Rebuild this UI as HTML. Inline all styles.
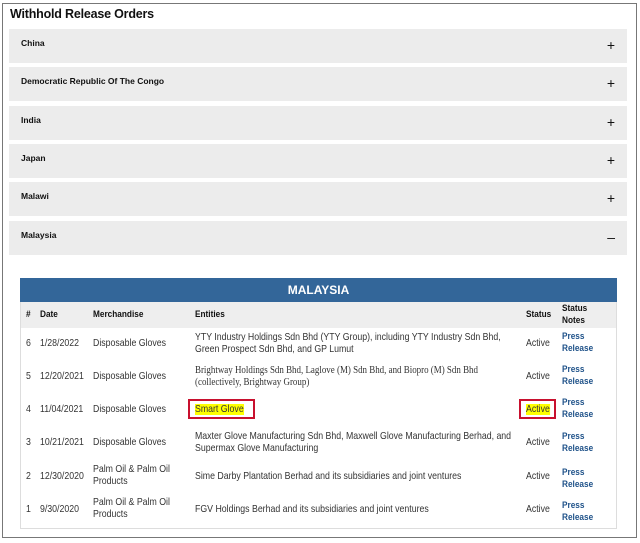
<!DOCTYPE html>
<html><head><meta charset="utf-8"><style>
*{margin:0;padding:0;box-sizing:border-box}
body{width:640px;height:543px;background:#fff;position:relative;overflow:hidden;font-family:"Liberation Sans",sans-serif;color:#222}
.frame{position:absolute;left:2px;top:3px;width:635px;height:535px;border:1.5px solid #777}
h1{position:absolute;left:10px;top:7px;font-size:12.5px;font-weight:bold;letter-spacing:-0.2px;color:#111}
.acc{position:absolute;left:9px;width:618px;height:34px;background:#ececec}
.acc span{position:absolute;left:12px;top:9px;font-size:8.5px;font-weight:bold;color:#111}
.acc i{position:absolute;right:12px;top:9px;font-style:normal;font-size:14px;color:#111;line-height:14px}
.box{position:absolute;left:20px;top:278px;width:597px;height:251px;border:1px solid #ddd}
.blue{position:absolute;left:20px;top:278px;width:597px;height:24px;background:#336699;color:#fff;font-weight:bold;font-size:12px;text-align:center;line-height:24px}
.hd{position:absolute;left:21px;top:302px;width:595px;height:26px;background:#eeeeee}
.t{position:absolute;font-size:10.2px;transform:scaleX(.86);transform-origin:0 0;white-space:nowrap;line-height:12px;color:#333}
.b{font-weight:bold;color:#111;font-size:9.6px}
.l{font-weight:bold;color:#1f5289;font-size:9.6px}
.s{font-family:"Liberation Serif",serif;font-size:10.4px}
.hl{background:#ffff00;color:#333}
.red{position:absolute;border:2px solid #c8102e}
</style></head><body>
<div class="frame"></div>
<h1>Withhold Release Orders</h1>
<div class="acc" style="top:29px"><span>China</span><i>+</i></div>
<div class="acc" style="top:67px"><span>Democratic Republic Of The Congo</span><i>+</i></div>
<div class="acc" style="top:106px"><span>India</span><i>+</i></div>
<div class="acc" style="top:144px"><span>Japan</span><i>+</i></div>
<div class="acc" style="top:182px"><span>Malawi</span><i>+</i></div>
<div class="acc" style="top:221px"><span>Malaysia</span><i>–</i></div>
<div class="box"></div>
<div class="blue">MALAYSIA</div>
<div class="hd"></div>
<div class="t b" style="left:26px;top:309px">#</div>
<div class="t b" style="left:40px;top:309px">Date</div>
<div class="t b" style="left:93px;top:309px">Merchandise</div>
<div class="t b" style="left:195px;top:309px">Entities</div>
<div class="t b" style="left:526px;top:309px">Status</div>
<div class="t b" style="left:562px;top:303px">Status<br>Notes</div>

<div class="t" style="left:26px;top:338px">6</div>
<div class="t" style="left:40px;top:338px">1/28/2022</div>
<div class="t" style="left:93px;top:338px">Disposable Gloves</div>
<div class="t" style="left:195px;top:332px">YTY Industry Holdings Sdn Bhd (YTY Group), including YTY Industry Sdn Bhd,<br>Green Prospect Sdn Bhd, and GP Lumut</div>
<div class="t" style="left:526px;top:338px">Active</div>
<div class="t l" style="left:562px;top:331px">Press<br>Release</div>

<div class="t" style="left:26px;top:371px">5</div>
<div class="t" style="left:40px;top:371px">12/20/2021</div>
<div class="t" style="left:93px;top:371px">Disposable Gloves</div>
<div class="t s" style="left:195px;top:365px">Brightway Holdings Sdn Bhd, Laglove (M) Sdn Bhd, and Biopro (M) Sdn Bhd<br>(collectively, Brightway Group)</div>
<div class="t" style="left:526px;top:371px">Active</div>
<div class="t l" style="left:562px;top:364px">Press<br>Release</div>

<div class="t" style="left:26px;top:404px">4</div>
<div class="t" style="left:40px;top:404px">11/04/2021</div>
<div class="t" style="left:93px;top:404px">Disposable Gloves</div>
<div class="t" style="left:195px;top:404px"><span class="hl">Smart Glove</span></div>
<div class="red" style="left:188px;top:399px;width:67px;height:20px"></div>
<div class="t" style="left:526px;top:404px"><span class="hl">Active</span></div>
<div class="red" style="left:519px;top:399px;width:37px;height:20px"></div>
<div class="t l" style="left:562px;top:397px">Press<br>Release</div>

<div class="t" style="left:26px;top:437px">3</div>
<div class="t" style="left:40px;top:437px">10/21/2021</div>
<div class="t" style="left:93px;top:437px">Disposable Gloves</div>
<div class="t" style="left:195px;top:431px">Maxter Glove Manufacturing Sdn Bhd, Maxwell Glove Manufacturing Berhad, and<br>Supermax Glove Manufacturing</div>
<div class="t" style="left:526px;top:437px">Active</div>
<div class="t l" style="left:562px;top:431px">Press<br>Release</div>

<div class="t" style="left:26px;top:471px">2</div>
<div class="t" style="left:40px;top:471px">12/30/2020</div>
<div class="t" style="left:93px;top:464px">Palm Oil &amp; Palm Oil<br>Products</div>
<div class="t" style="left:195px;top:471px">Sime Darby Plantation Berhad and its subsidiaries and joint ventures</div>
<div class="t" style="left:526px;top:471px">Active</div>
<div class="t l" style="left:562px;top:467px">Press<br>Release</div>

<div class="t" style="left:26px;top:504px">1</div>
<div class="t" style="left:40px;top:504px">9/30/2020</div>
<div class="t" style="left:93px;top:497px">Palm Oil &amp; Palm Oil<br>Products</div>
<div class="t" style="left:195px;top:504px">FGV Holdings Berhad and its subsidiaries and joint ventures</div>
<div class="t" style="left:526px;top:504px">Active</div>
<div class="t l" style="left:562px;top:500px">Press<br>Release</div>
</body></html>
